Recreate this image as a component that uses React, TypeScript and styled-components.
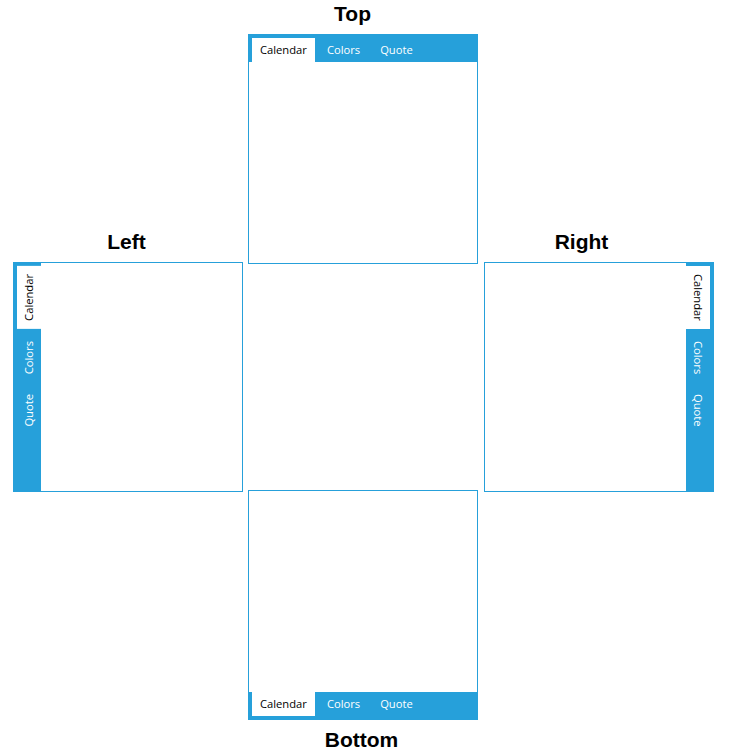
import styled, { createGlobalStyle, css } from 'styled-components';

type Side = 'top' | 'bottom' | 'left' | 'right';

const accent = '#26a0da';

const GlobalStyle = createGlobalStyle`
  html, body {
    margin: 0;
    padding: 0;
    background: #ffffff;
  }

  body {
    width: 730px;
    height: 753px;
    overflow: hidden;
  }
`;

const tabs = ['Calendar', 'Colors', 'Quote'];

function TabPanel({ side }: { side: Side }) {
  return (
    <Panel $side={side}>
      <Strip $side={side}>
        {tabs.map((label, i) => (
          <Tab key={label} $side={side} $selected={i === 0}>
            {label}
          </Tab>
        ))}
      </Strip>
      <Content />
    </Panel>
  );
}

export default function App() {
  return (
    <>
      <GlobalStyle />
      <Page>
        <SideColumn>
          <Title $shift={1.5}>Left</Title>
          <TabPanel side="left" />
        </SideColumn>

        <CenterColumn>
          <Title $shift={10.5} $gap={8} $pad={2}>
            Top
          </Title>
          <TabPanel side="top" />
          <Spacer />
          <TabPanel side="bottom" />
          <Title $shift={1.5} $gap={0} $pad={8}>
            Bottom
          </Title>
        </CenterColumn>

        <SideColumn>
          <Title $shift={17.5}>Right</Title>
          <TabPanel side="right" />
        </SideColumn>
      </Page>
    </>
  );
}

const Page = styled.div`
  display: flex;
  flex-direction: row;
  align-items: flex-start;

  padding-left: 13px;
  gap: 5px;
`;

const SideColumn = styled.div`
  width: 230px;
  padding-top: 230px;

  display: flex;
  flex-direction: column;

  &:last-child {
    margin-left: 1px;
  }
`;

const CenterColumn = styled.div`
  width: 230px;
  height: 753px;

  display: flex;
  flex-direction: column;
`;

const Spacer = styled.div`
  height: 226px;
  flex-shrink: 0;
`;

const Title = styled.h2<{ $shift: number; $gap?: number; $pad?: number }>`
  margin: 0;
  padding-top: ${({ $pad }) => $pad ?? 0}px;
  padding-right: ${({ $shift }) => $shift * 2}px;
  margin-bottom: ${({ $gap }) => $gap ?? 8}px;

  font-family: 'Liberation Sans', Arial, sans-serif;
  font-weight: 700;
  font-size: 21px;
  line-height: 24px;
  text-align: center;
  color: #000000;
`;

const Panel = styled.div<{ $side: Side }>`
  width: 230px;
  height: 230px;
  flex-shrink: 0;
  box-sizing: border-box;

  display: flex;
  flex-direction: ${({ $side }) =>
    ({ top: 'column', bottom: 'column-reverse', left: 'row', right: 'row-reverse' })[$side]};

  border: 1px solid ${accent};
  background: #ffffff;
`;

const Strip = styled.div<{ $side: Side }>`
  display: flex;
  flex-direction: ${({ $side }) => ($side === 'top' || $side === 'bottom' ? 'row' : 'column')};
  gap: 4px;
  flex-shrink: 0;

  background: ${accent};

  padding: ${({ $side }) =>
    ({
      top: '3px 3px 0 3px',
      bottom: '0 3px 3px 3px',
      left: '3px 0 3px 3px',
      right: '3px 3px 3px 0',
    })[$side]};
`;

const horizontalTab = css`
  height: 24px;
  padding: 0 8px;
  line-height: 24px;
`;

const verticalTab = css`
  width: 24px;
  padding: 8px 0;
  line-height: 24px;
  writing-mode: vertical-rl;
`;

const Tab = styled.div<{ $side: Side; $selected: boolean }>`
  ${({ $side }) => ($side === 'top' || $side === 'bottom' ? horizontalTab : verticalTab)}
  ${({ $side }) => $side === 'left' && 'transform: rotate(180deg);'}

  box-sizing: border-box;
  white-space: nowrap;

  font-family: 'Open Sans', 'Noto Sans', sans-serif;
  font-size: 11.2px;

  background: ${({ $selected }) => ($selected ? '#ffffff' : 'transparent')};
  color: ${({ $selected }) => ($selected ? '#000000' : '#ffffff')};
`;

const Content = styled.div`
  flex: 1;
  background: #ffffff;
`;
